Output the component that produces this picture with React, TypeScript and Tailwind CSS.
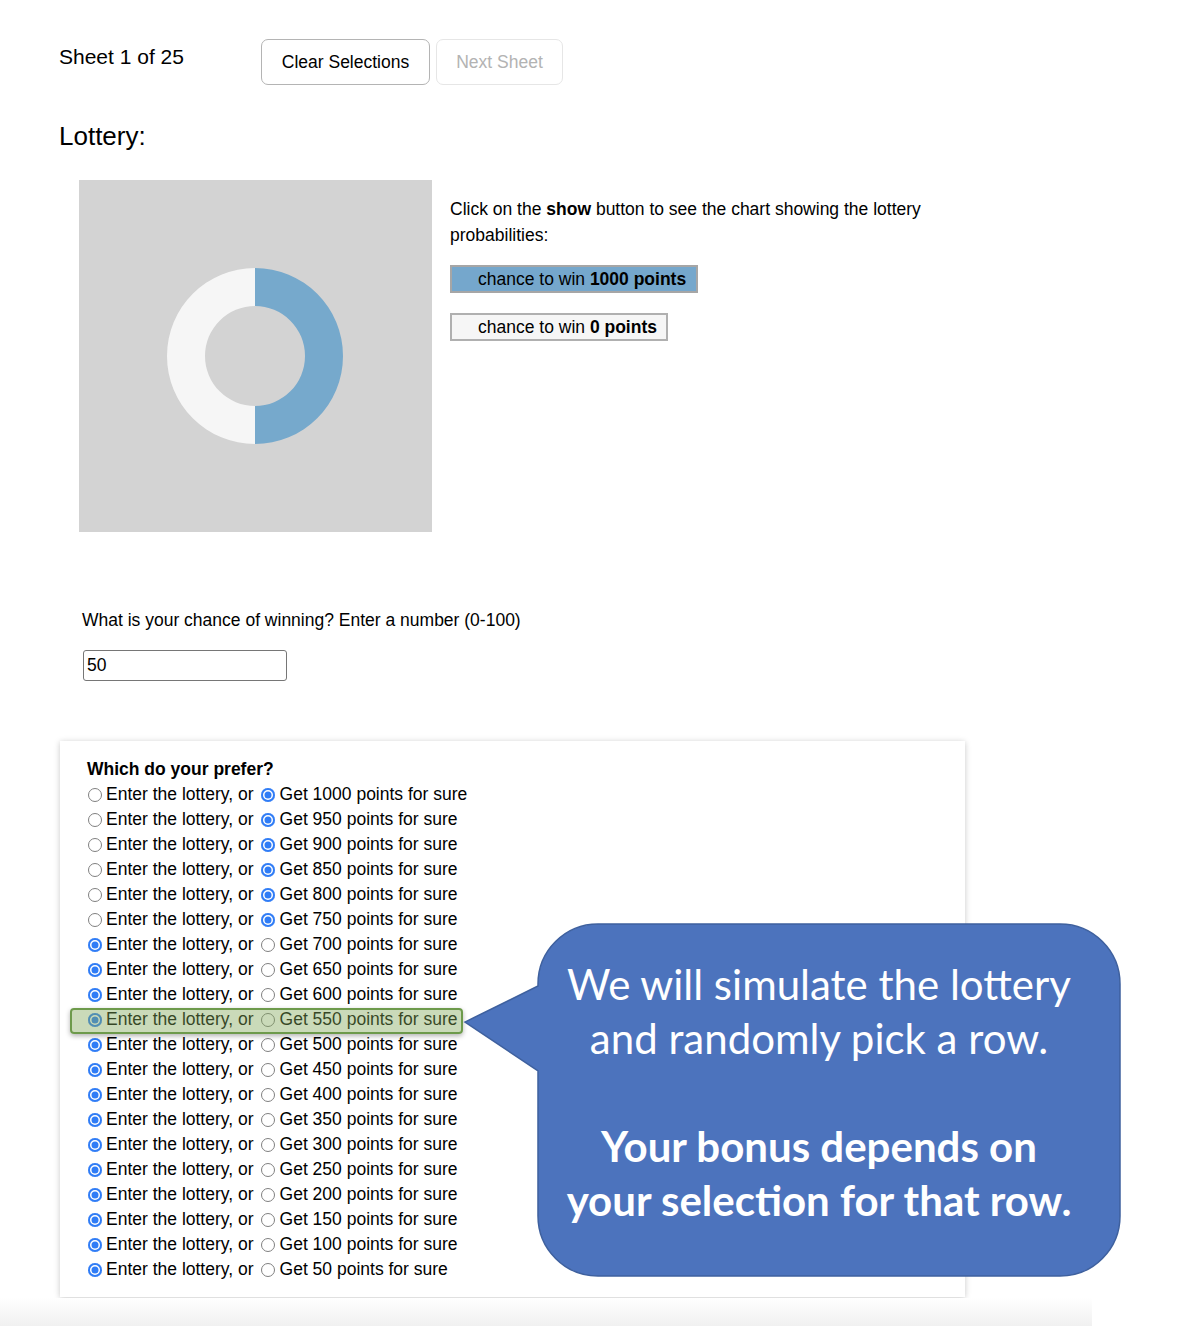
import React from 'react';

const amounts = [1000, 950, 900, 850, 800, 750, 700, 650, 600, 550, 500, 450, 400, 350, 300, 250, 200, 150, 100, 50];

function Radio({ checked }: { checked: boolean }) {
  if (checked) {
    return (
      <span className="block w-[14px] h-[14px] rounded-full bg-[#2f7cf6] shadow-[inset_0_0_0_2px_#2f7cf6,inset_0_0_0_3.5px_#ffffff] shrink-0" />
    );
  }
  return <span className="block w-[14px] h-[14px] rounded-full border border-[#7f7f7f] bg-white shrink-0" />;
}

function Donut() {
  // 50 / 50 split
  return (
    <svg width="353" height="352" viewBox="0 0 353 352">
      <path d="M176 88 A88 88 0 0 1 176 264 L176 226 A50 50 0 0 0 176 126 Z" fill="#76a9cc" />
      <path d="M176 88 A88 88 0 0 0 176 264 L176 226 A50 50 0 0 1 176 126 Z" fill="#f6f6f6" />
    </svg>
  );
}

function Callout() {
  return (
    <div className="absolute left-[462px] top-[922px] w-[662px] h-[358px]">
      <svg width="662" height="358" viewBox="0 0 662 358" className="absolute inset-0">
        <path
          d="M136 2 H598 A60 60 0 0 1 658 62 V294 A60 60 0 0 1 598 354 H136 A60 60 0 0 1 76 294 V149 L3 100 L76 64 V62 A60 60 0 0 1 136 2 Z"
          fill="#4c73bd"
          stroke="#3e609e"
          strokeWidth="1.5"
        />
      </svg>
      <div className="absolute left-[66px] top-[35px] w-[582px] text-center text-white font-['Lato',sans-serif] text-[42px] leading-[54px]">
        <div>We will simulate the lottery</div>
        <div>and randomly pick a row.</div>
        <div>&nbsp;</div>
        <div className="font-bold">Your bonus depends on</div>
        <div className="font-bold">your selection for that row.</div>
      </div>
    </div>
  );
}

export default function App() {
  return (
    <div className="relative w-[1184px] h-[1326px] overflow-hidden bg-white text-black font-['Liberation_Sans',Arial,sans-serif] text-[17.5px]">
      <div className="pl-[59px] pt-[39px]">
        {/* header */}
        <div className="flex items-start">
          <div className="w-[202px] pt-[4px] text-[21px] leading-[28px]">Sheet 1 of 25</div>
          <button className="w-[169px] h-[46px] rounded-[7px] border border-[#b4b4b4] bg-white text-[17.5px]">
            Clear Selections
          </button>
          <button className="ml-[6px] w-[127px] h-[46px] rounded-[7px] border border-[#e6e6e6] bg-white text-[17.5px] text-[#b3b3b3]">
            Next Sheet
          </button>
        </div>

        <h2 className="mt-[35px] text-[26px] leading-[32px]">Lottery:</h2>

        {/* lottery chart */}
        <div className="mt-[28px] ml-[20px] flex items-start">
          <div className="w-[353px] h-[352px] bg-[#d3d3d3]">
            <Donut />
          </div>
          <div className="ml-[18px] pt-[16px] w-[500px]">
            <p className="leading-[26px]">
              Click on the <b>show</b> button to see the chart showing the lottery probabilities:
            </p>
            <div className="mt-[17px] w-[248px] h-[28px] pl-[26px] flex items-center bg-[#75a7cc] border-2 border-[#a6a6a6]">
              chance to win&nbsp;<b>1000 points</b>
            </div>
            <div className="mt-[20px] w-[218px] h-[28px] pl-[26px] flex items-center bg-[#f6f6f6] border-2 border-[#b0b0b0]">
              chance to win&nbsp;<b>0 points</b>
            </div>
          </div>
        </div>

        {/* estimate */}
        <p className="mt-[75px] ml-[23px] leading-[26px]">What is your chance of winning? Enter a number (0-100)</p>
        <div className="mt-[17px] ml-[24px] w-[204px] h-[31px] rounded-[3px] border border-[#767676] px-[3px] flex items-center">
          50
        </div>

        {/* choices card */}
        <div className="relative mt-[60px] ml-[1px] w-[905px] bg-white pt-[16px] pb-[15px] pl-[27px] shadow-[0_1px_6px_rgba(0,0,0,0.22)]">
          <div className="h-[25px] flex items-center font-bold">Which do your prefer?</div>
          {amounts.map((a) => {
            const lottery = a <= 700;
            return (
              <div key={a} className="h-[25px] flex items-center">
                <span className="ml-[1px] mr-[4px] flex items-center">
                  <Radio checked={lottery} />
                </span>
                <span>Enter the lottery, or</span>
                <span className="ml-[7px] mr-[5px] flex items-center">
                  <Radio checked={!lottery} />
                </span>
                <span>Get {a} points for sure</span>
              </div>
            );
          })}
          {/* highlighted row */}
          <div className="absolute left-[10px] top-[267px] w-[393px] h-[26px] rounded-[4px] border-2 border-[#6d9a4b] bg-[rgba(128,168,88,0.42)] shadow-[0_2px_5px_rgba(0,0,0,0.3)]" />
        </div>
      </div>

      <div className="absolute left-0 bottom-0 w-[1092px] h-[28px] bg-gradient-to-b from-white to-[#f1f1f1]" />

      <Callout />
    </div>
  );
}
